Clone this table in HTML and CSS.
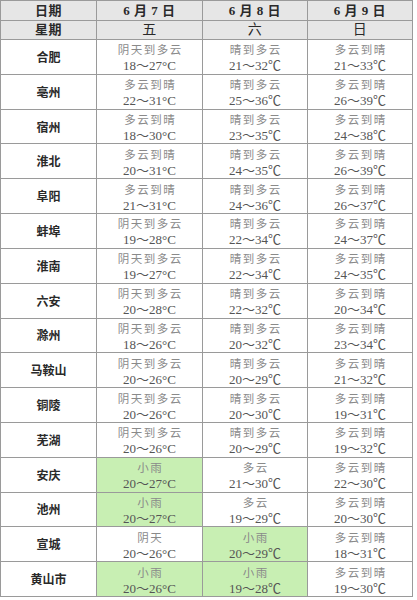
FILE: index.html
```html
<!DOCTYPE html>
<html lang="zh">
<head>
<meta charset="utf-8">
<link rel="stylesheet" href="styles.css">
</head>
<body>
<div class="table">
  <div class="cell head">日期</div>
  <div class="cell head">6 月 7 日</div>
  <div class="cell head">6 月 8 日</div>
  <div class="cell head">6 月 9 日</div>
  <div class="cell head">星期</div>
  <div class="cell head wk">五</div>
  <div class="cell head wk">六</div>
  <div class="cell head wk">日</div>

  <div class="cell city">合肥</div>
  <div class="cell"><span class="w">阴天到多云</span><span class="t">18～27°C</span></div>
  <div class="cell"><span class="w">晴到多云</span><span class="t">21～32℃</span></div>
  <div class="cell"><span class="w">多云到晴</span><span class="t">21～33℃</span></div>

  <div class="cell city">亳州</div>
  <div class="cell"><span class="w">多云到晴</span><span class="t">22～31°C</span></div>
  <div class="cell"><span class="w">晴到多云</span><span class="t">25～36℃</span></div>
  <div class="cell"><span class="w">多云到晴</span><span class="t">26～39℃</span></div>

  <div class="cell city">宿州</div>
  <div class="cell"><span class="w">多云到晴</span><span class="t">18～30°C</span></div>
  <div class="cell"><span class="w">晴到多云</span><span class="t">23～35℃</span></div>
  <div class="cell"><span class="w">多云到晴</span><span class="t">24～38℃</span></div>

  <div class="cell city">淮北</div>
  <div class="cell"><span class="w">多云到晴</span><span class="t">20～31°C</span></div>
  <div class="cell"><span class="w">晴到多云</span><span class="t">24～35℃</span></div>
  <div class="cell"><span class="w">多云到晴</span><span class="t">26～39℃</span></div>

  <div class="cell city">阜阳</div>
  <div class="cell"><span class="w">多云到晴</span><span class="t">21～31°C</span></div>
  <div class="cell"><span class="w">晴到多云</span><span class="t">24～36℃</span></div>
  <div class="cell"><span class="w">多云到晴</span><span class="t">26～37℃</span></div>

  <div class="cell city">蚌埠</div>
  <div class="cell"><span class="w">阴天到多云</span><span class="t">19～28°C</span></div>
  <div class="cell"><span class="w">晴到多云</span><span class="t">22～34℃</span></div>
  <div class="cell"><span class="w">多云到晴</span><span class="t">24～37℃</span></div>

  <div class="cell city">淮南</div>
  <div class="cell"><span class="w">阴天到多云</span><span class="t">19～27°C</span></div>
  <div class="cell"><span class="w">晴到多云</span><span class="t">22～34℃</span></div>
  <div class="cell"><span class="w">多云到晴</span><span class="t">24～35℃</span></div>

  <div class="cell city">六安</div>
  <div class="cell"><span class="w">阴天到多云</span><span class="t">20～28°C</span></div>
  <div class="cell"><span class="w">晴到多云</span><span class="t">22～32℃</span></div>
  <div class="cell"><span class="w">多云到晴</span><span class="t">20～34℃</span></div>

  <div class="cell city">滁州</div>
  <div class="cell"><span class="w">阴天到多云</span><span class="t">18～26°C</span></div>
  <div class="cell"><span class="w">晴到多云</span><span class="t">20～32℃</span></div>
  <div class="cell"><span class="w">多云到晴</span><span class="t">23～34℃</span></div>

  <div class="cell city">马鞍山</div>
  <div class="cell"><span class="w">阴天到多云</span><span class="t">20～26°C</span></div>
  <div class="cell"><span class="w">晴到多云</span><span class="t">20～29℃</span></div>
  <div class="cell"><span class="w">多云到晴</span><span class="t">21～32℃</span></div>

  <div class="cell city">铜陵</div>
  <div class="cell"><span class="w">阴天到多云</span><span class="t">20～26°C</span></div>
  <div class="cell"><span class="w">晴到多云</span><span class="t">20～30℃</span></div>
  <div class="cell"><span class="w">多云到晴</span><span class="t">19～31℃</span></div>

  <div class="cell city">芜湖</div>
  <div class="cell"><span class="w">阴天到多云</span><span class="t">20～26°C</span></div>
  <div class="cell"><span class="w">晴到多云</span><span class="t">20～29℃</span></div>
  <div class="cell"><span class="w">多云到晴</span><span class="t">19～32℃</span></div>

  <div class="cell city">安庆</div>
  <div class="cell rain"><span class="w">小雨</span><span class="t">20～27°C</span></div>
  <div class="cell"><span class="w">多云</span><span class="t">21～30℃</span></div>
  <div class="cell"><span class="w">多云到晴</span><span class="t">22～30℃</span></div>

  <div class="cell city">池州</div>
  <div class="cell rain"><span class="w">小雨</span><span class="t">20～27°C</span></div>
  <div class="cell"><span class="w">多云</span><span class="t">19～29℃</span></div>
  <div class="cell"><span class="w">多云到晴</span><span class="t">20～30℃</span></div>

  <div class="cell city">宣城</div>
  <div class="cell"><span class="w">阴天</span><span class="t">20～26°C</span></div>
  <div class="cell rain"><span class="w">小雨</span><span class="t">20～29℃</span></div>
  <div class="cell"><span class="w">多云到晴</span><span class="t">18～31℃</span></div>

  <div class="cell city">黄山市</div>
  <div class="cell rain"><span class="w">小雨</span><span class="t">20～26°C</span></div>
  <div class="cell rain"><span class="w">小雨</span><span class="t">19～28℃</span></div>
  <div class="cell"><span class="w">多云到晴</span><span class="t">19～30℃</span></div>
</div>
</body>
</html>
```

FILE: styles.css
```css
html, body {
  margin: 0;
  padding: 0;
  background: #ffffff;
}

body {
  font-family: "Liberation Serif", "Noto Sans CJK SC", serif;
}

.table {
  display: grid;
  grid-template-columns: 95px 105px 104px 104px;
  grid-template-rows: 19px 18px repeat(16, 1fr);
  gap: 1px;
  padding: 1px;
  width: 413px;
  height: 597px;
  box-sizing: border-box;
  background: #9a9a9a;
}

.cell {
  background: #ffffff;
  display: flex;
  flex-direction: column;
  align-items: center;
  justify-content: center;
  overflow: hidden;
}

.head {
  background: #e6e6e6;
  color: #2a2a2a;
  font-family: "Liberation Serif", "Noto Sans CJK SC", serif;
  font-weight: bold;
  font-size: 13px;
  line-height: 16px;
  letter-spacing: 0.5px;
}

.head.wk {
  font-weight: normal;
  font-size: 14px;
}

.city {
  color: #2a2a2a;
  font-family: "Noto Sans CJK SC", sans-serif;
  font-weight: bold;
  font-size: 12px;
  line-height: 16px;
}

.rain {
  background: #c8efb3;
}

.w {
  font-family: "Noto Sans CJK SC", sans-serif;
  font-size: 11.5px;
  line-height: 16px;
  padding-top: 2px;
  color: #8a8a8a;
  letter-spacing: 1.5px;
  margin-right: -1.5px;
}

.t {
  font-family: "Liberation Serif", "Noto Sans CJK SC", serif;
  font-size: 13px;
  line-height: 17px;
  color: #555;
}
```
